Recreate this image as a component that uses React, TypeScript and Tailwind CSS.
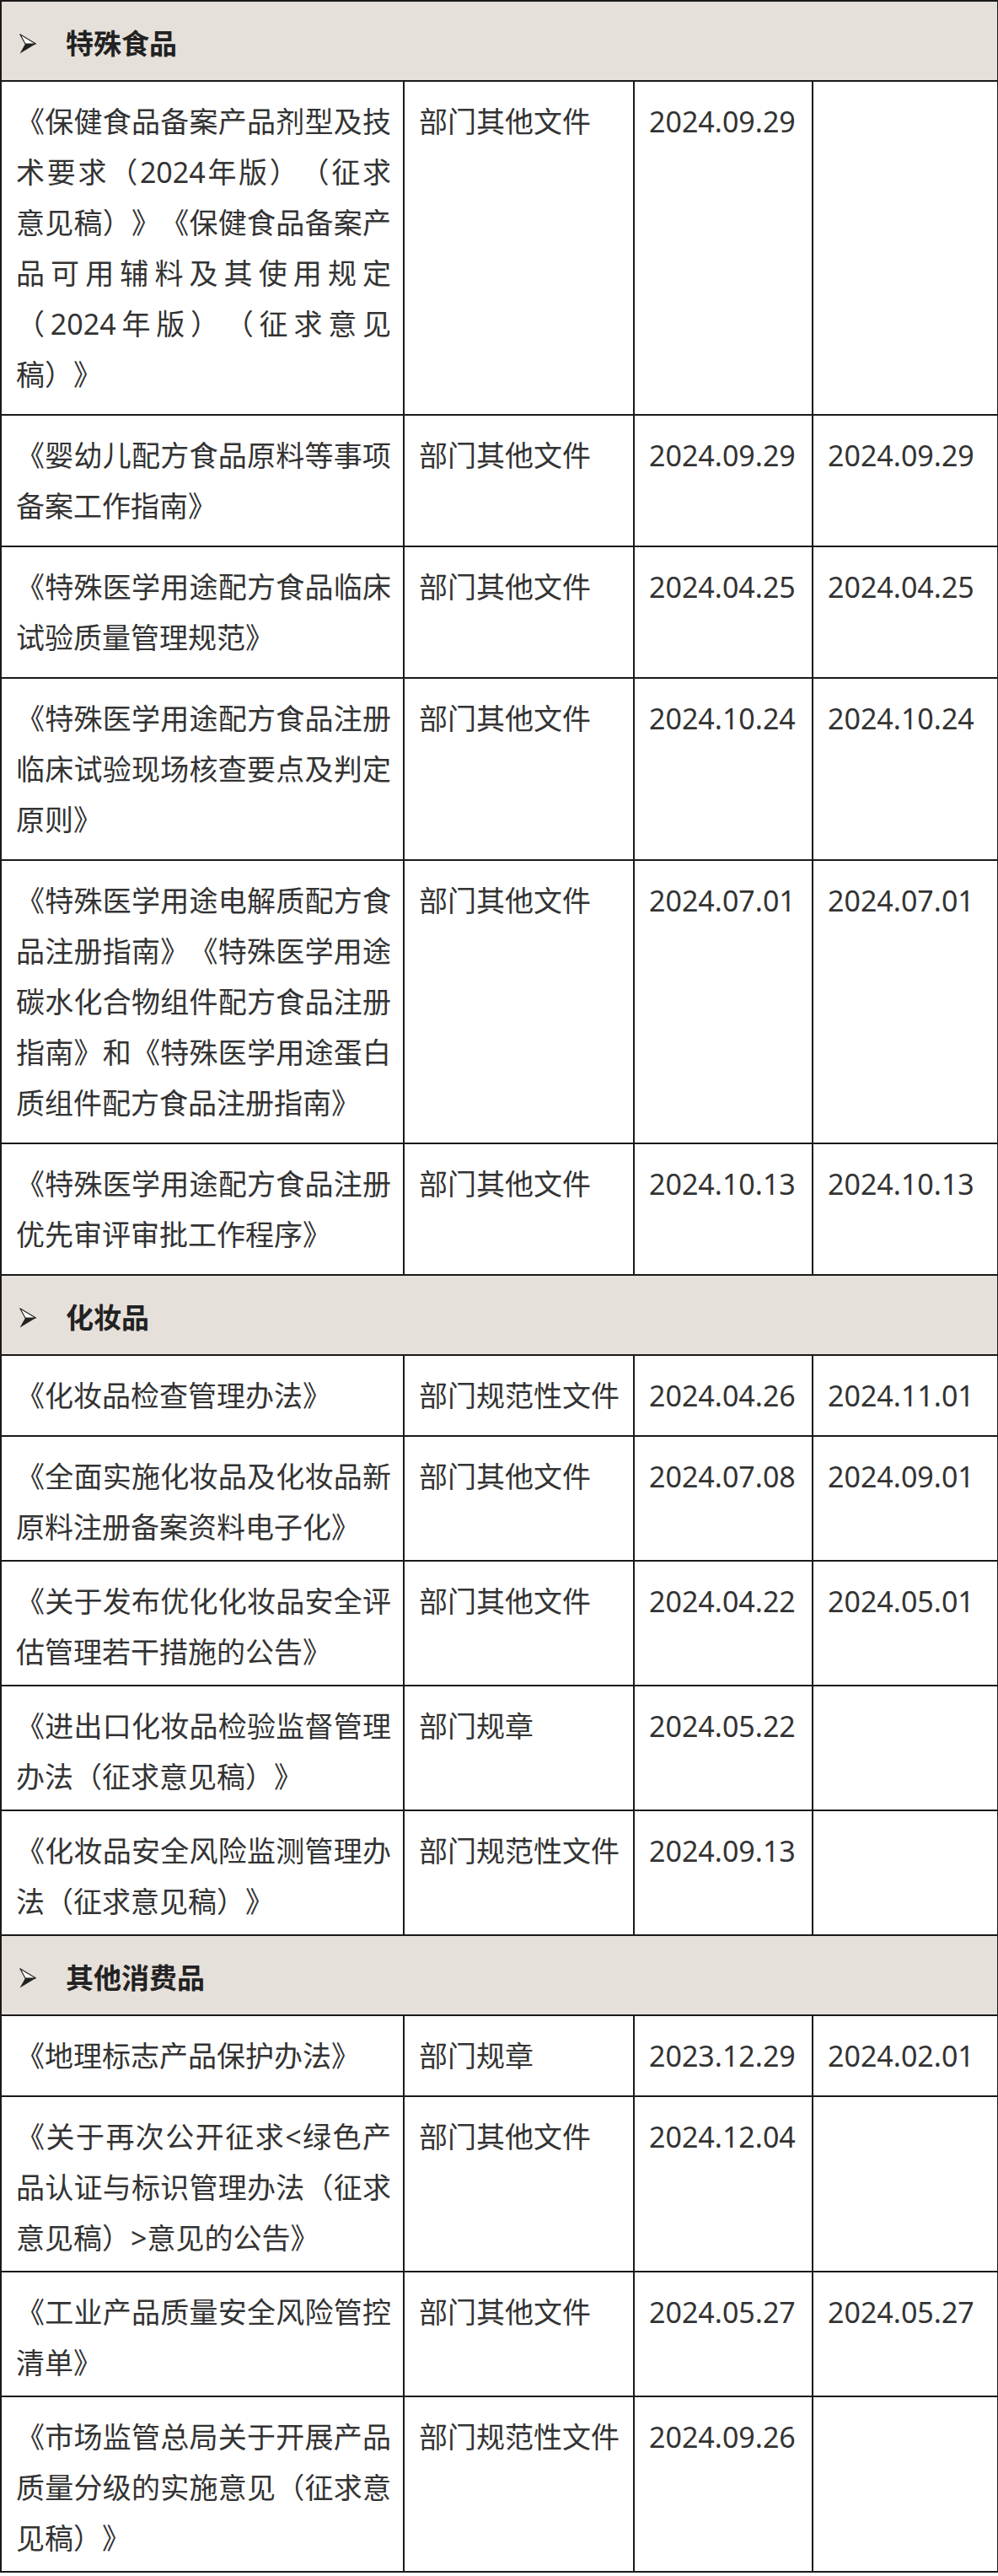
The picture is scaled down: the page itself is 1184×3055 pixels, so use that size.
type Row = { title: string; kind: string; pub: string; eff: string; single?: boolean };
type Section = { name: string; tight?: boolean; rows: Row[] };

const sections: Section[] = [
  {
    name: "特殊食品",
    rows: [
      {
        title:
          "《保健食品备案产品剂型及技术要求（2024年版）（征求意见稿）》《保健食品备案产品可用辅料及其使用规定（2024年版）（征求意见稿）》",
        kind: "部门其他文件",
        pub: "2024.09.29",
        eff: "",
      },
      { title: "《婴幼儿配方食品原料等事项备案工作指南》", kind: "部门其他文件", pub: "2024.09.29", eff: "2024.09.29" },
      { title: "《特殊医学用途配方食品临床试验质量管理规范》", kind: "部门其他文件", pub: "2024.04.25", eff: "2024.04.25" },
      {
        title: "《特殊医学用途配方食品注册临床试验现场核查要点及判定原则》",
        kind: "部门其他文件",
        pub: "2024.10.24",
        eff: "2024.10.24",
      },
      {
        title:
          "《特殊医学用途电解质配方食品注册指南》《特殊医学用途碳水化合物组件配方食品注册指南》和《特殊医学用途蛋白质组件配方食品注册指南》",
        kind: "部门其他文件",
        pub: "2024.07.01",
        eff: "2024.07.01",
      },
      {
        title: "《特殊医学用途配方食品注册优先审评审批工作程序》",
        kind: "部门其他文件",
        pub: "2024.10.13",
        eff: "2024.10.13",
      },
    ],
  },
  {
    name: "化妆品",
    tight: true,
    rows: [
      { title: "《化妆品检查管理办法》", kind: "部门规范性文件", pub: "2024.04.26", eff: "2024.11.01", single: true },
      {
        title: "《全面实施化妆品及化妆品新原料注册备案资料电子化》",
        kind: "部门其他文件",
        pub: "2024.07.08",
        eff: "2024.09.01",
      },
      {
        title: "《关于发布优化化妆品安全评估管理若干措施的公告》",
        kind: "部门其他文件",
        pub: "2024.04.22",
        eff: "2024.05.01",
      },
      { title: "《进出口化妆品检验监督管理办法（征求意见稿）》", kind: "部门规章", pub: "2024.05.22", eff: "" },
      { title: "《化妆品安全风险监测管理办法（征求意见稿）》", kind: "部门规范性文件", pub: "2024.09.13", eff: "" },
    ],
  },
  {
    name: "其他消费品",
    tight: true,
    rows: [
      { title: "《地理标志产品保护办法》", kind: "部门规章", pub: "2023.12.29", eff: "2024.02.01", single: true },
      {
        title: "《关于再次公开征求<绿色产品认证与标识管理办法（征求意见稿）>意见的公告》",
        kind: "部门其他文件",
        pub: "2024.12.04",
        eff: "",
      },
      { title: "《工业产品质量安全风险管控清单》", kind: "部门其他文件", pub: "2024.05.27", eff: "2024.05.27" },
      {
        title: "《市场监管总局关于开展产品质量分级的实施意见（征求意见稿）》",
        kind: "部门规范性文件",
        pub: "2024.09.26",
        eff: "",
      },
    ],
  },
];

function Arrow() {
  return (
    <svg width="20" height="24" viewBox="0 0 20 24" className="block">
      <path d="M0.8 0.8 L19.5 12 L7 12 Z" fill="#ffffff" stroke="#222" strokeWidth="1.2" strokeLinejoin="round" />
      <path d="M7 12 L19.5 12 L0.5 23.5 Z" fill="#222" />
    </svg>
  );
}

const base = "border-2 border-[#1a1a1a] align-top pl-[17px] pr-[14px] pt-[17px]";

export default function App() {
  return (
    <div
      className="bg-white text-[#333] text-[34px] leading-[60px] [text-spacing-trim:space-all]"
      style={{ fontFamily: '"Noto Sans", "Noto Sans CJK SC", sans-serif' }}
    >
      <table className="table-fixed border-collapse w-[1183px]">
        <colgroup>
          <col className="w-[478px]" />
          <col className="w-[273px]" />
          <col className="w-[212px]" />
          <col className="w-[220px]" />
        </colgroup>
        <tbody>
          {sections.map((s) => {
            const cell = base + (s.tight ? " pb-[9px]" : " pb-[17px]");
            return (
              <>
                <tr key={s.name}>
                  <td colSpan={4} className="border-2 border-[#1a1a1a] bg-[#e6e0da] h-[95px] p-0">
                    <div className="flex items-center pl-[21px] pt-[6px]">
                      <Arrow />
                      <span className="ml-[35px] font-bold text-[33px] text-[#222]">{s.name}</span>
                    </div>
                  </td>
                </tr>
                {s.rows.map((r) => (
                  <tr key={r.title} className={r.single ? "h-[96px]" : ""}>
                    <td className={cell + " text-justify"}>{r.title}</td>
                    <td className={cell}>{r.kind}</td>
                    <td className={cell}>{r.pub}</td>
                    <td className={cell}>{r.eff}</td>
                  </tr>
                ))}
              </>
            );
          })}
        </tbody>
      </table>
    </div>
  );
}
